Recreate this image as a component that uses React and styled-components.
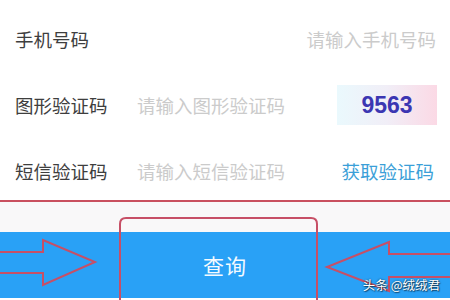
import React from "react";
import styled, { createGlobalStyle } from "styled-components";

const GlobalStyle = createGlobalStyle`
  html, body {
    margin: 0;
    padding: 0;
    background: #ffffff;
    font-family: "Noto Sans CJK SC", "Noto Sans", sans-serif;
  }
`;

const Page = styled.div`
  position: relative;
  width: 450px;
  height: 300px;
  overflow: hidden;
  background: #ffffff;
`;

const Form = styled.div`
  height: 200px;
  box-sizing: border-box;
  padding: 6px 14px 0 15px;
  overflow: hidden;
`;

const Row = styled.div`
  height: 66px;
  display: flex;
  align-items: center;
`;

const Label = styled.div`
  width: 122px;
  flex-shrink: 0;
  font-size: 18.5px;
  color: #3e3e3e;
`;

const Placeholder = styled.div`
  flex: 1;
  font-size: 18.5px;
  color: #cbcbcb;
  text-align: ${(p) => (p.$right ? "right" : "left")};
`;

const Captcha = styled.div`
  width: 100px;
  height: 40px;
  margin-right: -1px;
  display: flex;
  align-items: center;
  justify-content: center;
  background: linear-gradient(90deg, #eaf9fd 0%, #f1eef7 50%, #fbd9e5 100%);
  font-family: "Liberation Sans", "DejaVu Sans", sans-serif;
  font-weight: bold;
  font-size: 23px;
  color: #3b36b2;
`;

const SmsLink = styled.div`
  font-size: 18.5px;
  color: #3b9fd8;
  padding-right: 2px;
`;

const Divider = styled.div`
  height: 2px;
  background: #c9505f;
`;

const Gap = styled.div`
  height: 30px;
  background: #f9f8f9;
`;

const QueryButton = styled.div`
  height: 66px;
  display: flex;
  align-items: center;
  justify-content: center;
  background: #29a1f6;
  color: #f4faff;
  font-size: 21px;
  letter-spacing: 1px;
`;

const Overlay = styled.svg`
  position: absolute;
  left: 0;
  top: 0;
  pointer-events: none;
`;

const Watermark = styled.div`
  position: absolute;
  right: 10px;
  bottom: 6px;
  font-size: 12.5px;
  color: #ffffff;
  text-shadow: 0 0 2px rgba(0, 0, 0, 0.7), 1px 1px 1px rgba(0, 0, 0, 0.5);
`;

export default function App() {
  return (
    <Page>
      <GlobalStyle />
      <Form>
        <Row>
          <Label>手机号码</Label>
          <Placeholder $right>请输入手机号码</Placeholder>
        </Row>
        <Row>
          <Label>图形验证码</Label>
          <Placeholder>请输入图形验证码</Placeholder>
          <Captcha>9563</Captcha>
        </Row>
        <Row>
          <Label>短信验证码</Label>
          <Placeholder>请输入短信验证码</Placeholder>
          <SmsLink>获取验证码</SmsLink>
        </Row>
      </Form>
      <Divider />
      <Gap />
      <QueryButton>查询</QueryButton>

      <Overlay width="450" height="300" viewBox="0 0 450 300">
        <g fill="none" stroke="#c74f66" strokeWidth="2" strokeLinejoin="miter">
          <path d="M120 306 V224 Q120 218 126 218 H311 Q317 218 317 224 V306" />
          <polygon points="-2,252 43,252 43,240 95,262 43,285 43,273 -2,273" />
          <polygon points="452,254 389,254 389,242 327,267 389,291 389,277 452,277" />
        </g>
      </Overlay>
      <Watermark>头条 @绒绒君</Watermark>
    </Page>
  );
}
